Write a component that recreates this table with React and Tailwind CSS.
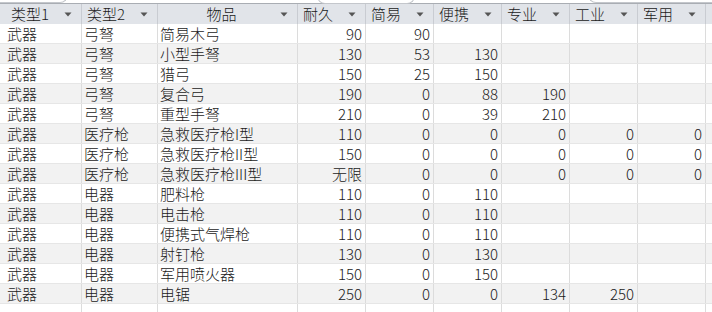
const COLS = [
  { key: 't1', label: '类型1', w: 'w-[82px]', first: true },
  { key: 't2', label: '类型2', w: 'w-[76px]' },
  { key: 'name', label: '物品', w: 'w-[140px]', center: true },
  { key: 'dur', label: '耐久', w: 'w-[68px]', num: true },
  { key: 'a', label: '简易', w: 'w-[68px]', num: true },
  { key: 'b', label: '便携', w: 'w-[68px]', num: true },
  { key: 'c', label: '专业', w: 'w-[68px]', num: true },
  { key: 'd', label: '工业', w: 'w-[68px]', num: true },
  { key: 'e', label: '军用', w: 'w-[68px]', num: true },
]

const ROWS = [
  ['武器', '弓弩', '简易木弓', '90', '90'],
  ['武器', '弓弩', '小型手弩', '130', '53', '130'],
  ['武器', '弓弩', '猎弓', '150', '25', '150'],
  ['武器', '弓弩', '复合弓', '190', '0', '88', '190'],
  ['武器', '弓弩', '重型手弩', '210', '0', '39', '210'],
  ['武器', '医疗枪', '急救医疗枪I型', '110', '0', '0', '0', '0', '0'],
  ['武器', '医疗枪', '急救医疗枪II型', '150', '0', '0', '0', '0', '0'],
  ['武器', '医疗枪', '急救医疗枪III型', '无限', '0', '0', '0', '0', '0'],
  ['武器', '电器', '肥料枪', '110', '0', '110'],
  ['武器', '电器', '电击枪', '110', '0', '110'],
  ['武器', '电器', '便携式气焊枪', '110', '0', '110'],
  ['武器', '电器', '射钉枪', '130', '0', '130'],
  ['武器', '电器', '军用喷火器', '150', '0', '150'],
  ['武器', '电器', '电锯', '250', '0', '0', '134', '250'],
]

function Arrow() {
  return (
    <svg width="8" height="5" viewBox="0 0 8 5" className="shrink-0">
      <path d="M0.5 0.5 H7.5 L4 4.5 Z" fill="#555" />
    </svg>
  )
}

export default function App() {
  return (
    <div
      className="relative w-[712px] h-[312px] overflow-hidden bg-white text-[#1a1a1a] text-[15px] font-light"
      style={{ fontFamily: '"Noto Sans CJK SC", "Noto Sans", sans-serif' }}
    >
      {/* top strip with bits of the ribbon above */}
      <div className="h-[4px] border-b border-[#a9adb3]" />
      <div className="absolute left-[-40px] top-[-12px] w-[108px] h-[15px] rounded-br-[8px] border-r border-b border-[#c4c7cc]" />
      <div className="absolute left-[317px] top-[-12px] w-[98px] h-[16px] rounded-b-[8px] border border-t-0 border-[#c4c7cc]" />
      <div className="absolute left-[588px] top-[-12px] w-[140px] h-[15px] rounded-bl-[8px] border-l border-b border-[#c4c7cc]" />

      {/* header */}
      <div className="flex h-[20px] bg-[#e1e4e9]">
        {COLS.map(c => (
          <div
            key={c.key}
            className={`${c.w} shrink-0 flex items-center border-r border-[#c9ccd2] ${c.first ? 'pl-[11px]' : 'pl-[5px]'} pr-[9px] leading-[20px]`}
          >
            <span className={`flex-1 ${c.center ? 'text-center' : ''}`}>{c.label}</span>
            <Arrow />
          </div>
        ))}
        <div className="flex-1" />
      </div>

      {/* rows */}
      {ROWS.map((r, i) => (
        <div key={i} className={`flex h-[20px] border-b border-[#e6e6e6] ${i % 2 ? 'bg-[#f2f2f2]' : 'bg-white'}`}>
          {COLS.map((c, j) => (
            <div
              key={c.key}
              className={`${c.w} shrink-0 border-r border-[#dcdcdc] leading-[19px] whitespace-nowrap overflow-hidden ${c.num ? 'text-right pr-[3px]' : c.first ? 'pl-[7px]' : 'pl-[2px]'}`}
            >
              {r[j] ?? ''}
            </div>
          ))}
          <div className="flex-1" />
        </div>
      ))}

      {/* empty space below the last record */}
      <div className="flex h-[20px]">
        {COLS.map(c => (
          <div key={c.key} className={`${c.w} shrink-0 border-r border-[#dcdcdc]`} />
        ))}
      </div>
    </div>
  )
}
